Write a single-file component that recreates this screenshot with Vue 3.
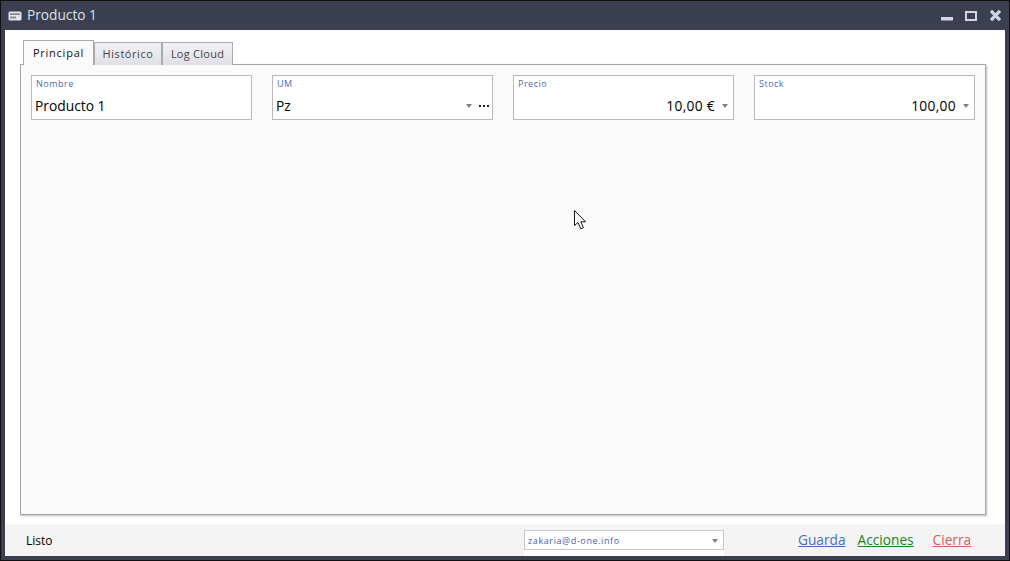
<script setup>
const fields = [
  { label: 'Nombre', value: 'Producto 1' },
  { label: 'UM', value: 'Pz', arrow: true, dots: true },
  { label: 'Precio', value: '10,00 €', arrow: true, right: true },
  { label: 'Stock', value: '100,00', arrow: true, right: true }
]
</script>

<template>
  <div class="window">
    <header class="titlebar">
      <svg class="appicon" width="14" height="12" viewBox="0 0 14 12">
        <rect x="0.5" y="1.5" width="13" height="9" rx="1.5" fill="#e4e6ec" />
        <rect x="2" y="3.5" width="10" height="1.2" fill="#5a5e6c" />
        <rect x="2" y="6.5" width="6" height="2" fill="#8b8e9a" />
      </svg>
      <span class="title">Producto 1</span>
      <div class="controls">
        <svg width="13" height="14" viewBox="0 0 13 14"><rect x="0" y="8" width="12" height="3.5" fill="#d3d6e2" /></svg>
        <svg width="13" height="14" viewBox="0 0 13 14"><rect x="1" y="3" width="10" height="8" fill="none" stroke="#d3d6e2" stroke-width="2" /></svg>
        <svg width="13" height="14" viewBox="0 0 13 14"><path d="M2 1.8 11 11.2M11 1.8 2 11.2" stroke="#d3d6e2" stroke-width="3.2" /></svg>
      </div>
    </header>

    <main class="body">
      <div class="tabs">
        <div class="tab active">Principal</div>
        <div class="tab hist">Histórico</div>
        <div class="tab log">Log Cloud</div>
      </div>
      <section class="panel">
        <div v-for="f in fields" :key="f.label" class="field">
          <div class="label">{{ f.label }}</div>
          <div class="row">
            <span class="value" :class="{ right: f.right }">{{ f.value }}</span>
            <span v-if="f.arrow" class="arrow"></span>
            <span v-if="f.dots" class="dots"><i></i><i></i><i></i></span>
          </div>
        </div>
        <svg class="cursor" width="13" height="20" viewBox="0 0 13 20">
          <path d="M0.5 0.5V15.5L4 12.5L6.8 18.8L9.4 17.6L6.8 11.8H11.5Z" fill="#fff" stroke="#111" stroke-width="1" />
        </svg>
      </section>
    </main>

    <footer class="status">
      <span class="ready">Listo</span>
      <div class="account">
        <span>zakaria@d-one.info</span>
        <span class="arrow"></span>
      </div>
      <nav class="links">
        <a class="save">Guarda</a>
        <a class="actions">Acciones</a>
        <a class="close">Cierra</a>
      </nav>
    </footer>
  </div>
</template>

<style>
html, body { margin: 0; background: #3b3f4f; }
</style>

<style scoped>
.window {
  width: 1010px;
  height: 561px;
  box-sizing: border-box;
  border: 1px solid #111;
  background: #3b3f4f;
  display: flex;
  flex-direction: column;
  padding: 0 4px 4px;
  font-family: "Open Sans", "Noto Sans", sans-serif;
  color: #000;
  overflow: hidden;
}
.titlebar {
  height: 29px;
  flex: none;
  display: flex;
  align-items: center;
  color: #dfe1e8;
}
.appicon { margin: 0 5px 0 3px; }
.title { font-size: 13.7px; padding-bottom: 2px; }
.controls {
  margin-left: auto;
  margin-top: 1px;
  margin-right: 3px;
  display: flex;
  gap: 11px;
}
.body {
  flex: 1;
  background: #fff;
  padding: 10px 19px 9px 15px;
  display: flex;
  flex-direction: column;
  min-height: 0;
}
.tabs {
  display: flex;
  height: 25px;
  padding-left: 3px;
  align-items: flex-end;
  position: relative;
  z-index: 1;
  margin-bottom: -1px;
}
.tab {
  box-sizing: border-box;
  height: 23px;
  border: 1px solid #a9aab0;
  border-bottom: 0;
  background: linear-gradient(#f2f2f5, #dfe0e6);
  font-size: 11px;
  line-height: 22px;
  color: #444;
  text-align: center;
}
.tab.active {
  width: 71px;
  height: 25px;
  background: #fafafa;
  color: #111;
  line-height: 23px;
  letter-spacing: 0.75px;
}
.tab.hist {
  width: 68px;
  letter-spacing: 0.55px;
}
.tab.log {
  width: 71px;
  letter-spacing: 0.25px;
}
.panel {
  flex: 1;
  position: relative;
  background: #fafafa;
  border: 1px solid #a5a5a8;
  box-shadow: 1px 1px 2px #bbb;
  padding: 10px 10px;
  display: grid;
  grid-template-columns: repeat(4, 221px);
  column-gap: 20px;
  align-content: start;
}
.field {
  box-sizing: border-box;
  height: 45px;
  background: #fff;
  border: 1px solid #b9b9b9;
  padding: 2px 3px 0 3px;
}
.label {
  font-size: 9px;
  line-height: 12px;
  letter-spacing: 0.5px;
  color: #4a6cb8;
  padding-left: 1px;
}
.row {
  display: flex;
  align-items: center;
  height: 22px;
  margin-top: 4px;
  font-size: 13.8px;
}
.value { flex: 1; white-space: nowrap; }
.value.right { text-align: right; letter-spacing: 0.3px; }
.arrow {
  flex: none;
  width: 0;
  height: 0;
  border-left: 3.5px solid transparent;
  border-right: 3.5px solid transparent;
  border-top: 4px solid #808080;
  margin-left: 7px;
  margin-right: 2px;
  margin-top: 2px;
}
.dots { display: flex; gap: 2px; margin-left: 5px; margin-top: 2px; }
.dots i { width: 2px; height: 2px; background: #222; }
.cursor { position: absolute; left: 553px; top: 145px; }
.status {
  flex: none;
  height: 32px;
  background: #f4f4f4;
  display: flex;
  align-items: center;
  position: relative;
  padding-left: 21px;
  font-size: 12px;
}
.ready { width: 498px; }
.account {
  box-sizing: border-box;
  position: relative;
  width: 200px;
  height: 20px;
  border: 1px solid #c8c8d0;
  background: #fff;
  display: flex;
  align-items: center;
  justify-content: space-between;
  padding: 0 3px;
  font-size: 9px;
  letter-spacing: 0.6px;
  color: #3f62b4;
}
.account::after {
  content: "";
  position: absolute;
  top: calc(100% + 1px);
  left: -1px;
  right: -1px;
  height: 6px;
  background: #fff;
}
.links {
  margin-left: 74px;
  margin-bottom: 2px;
  display: flex;
  gap: 12px;
  font-size: 13.7px;
}
.links a { text-decoration: underline; }
.save { color: #4a6cb8; }
.actions { color: #1d7f1d; }
.close { color: #d06060; margin-left: 7px; }
</style>
